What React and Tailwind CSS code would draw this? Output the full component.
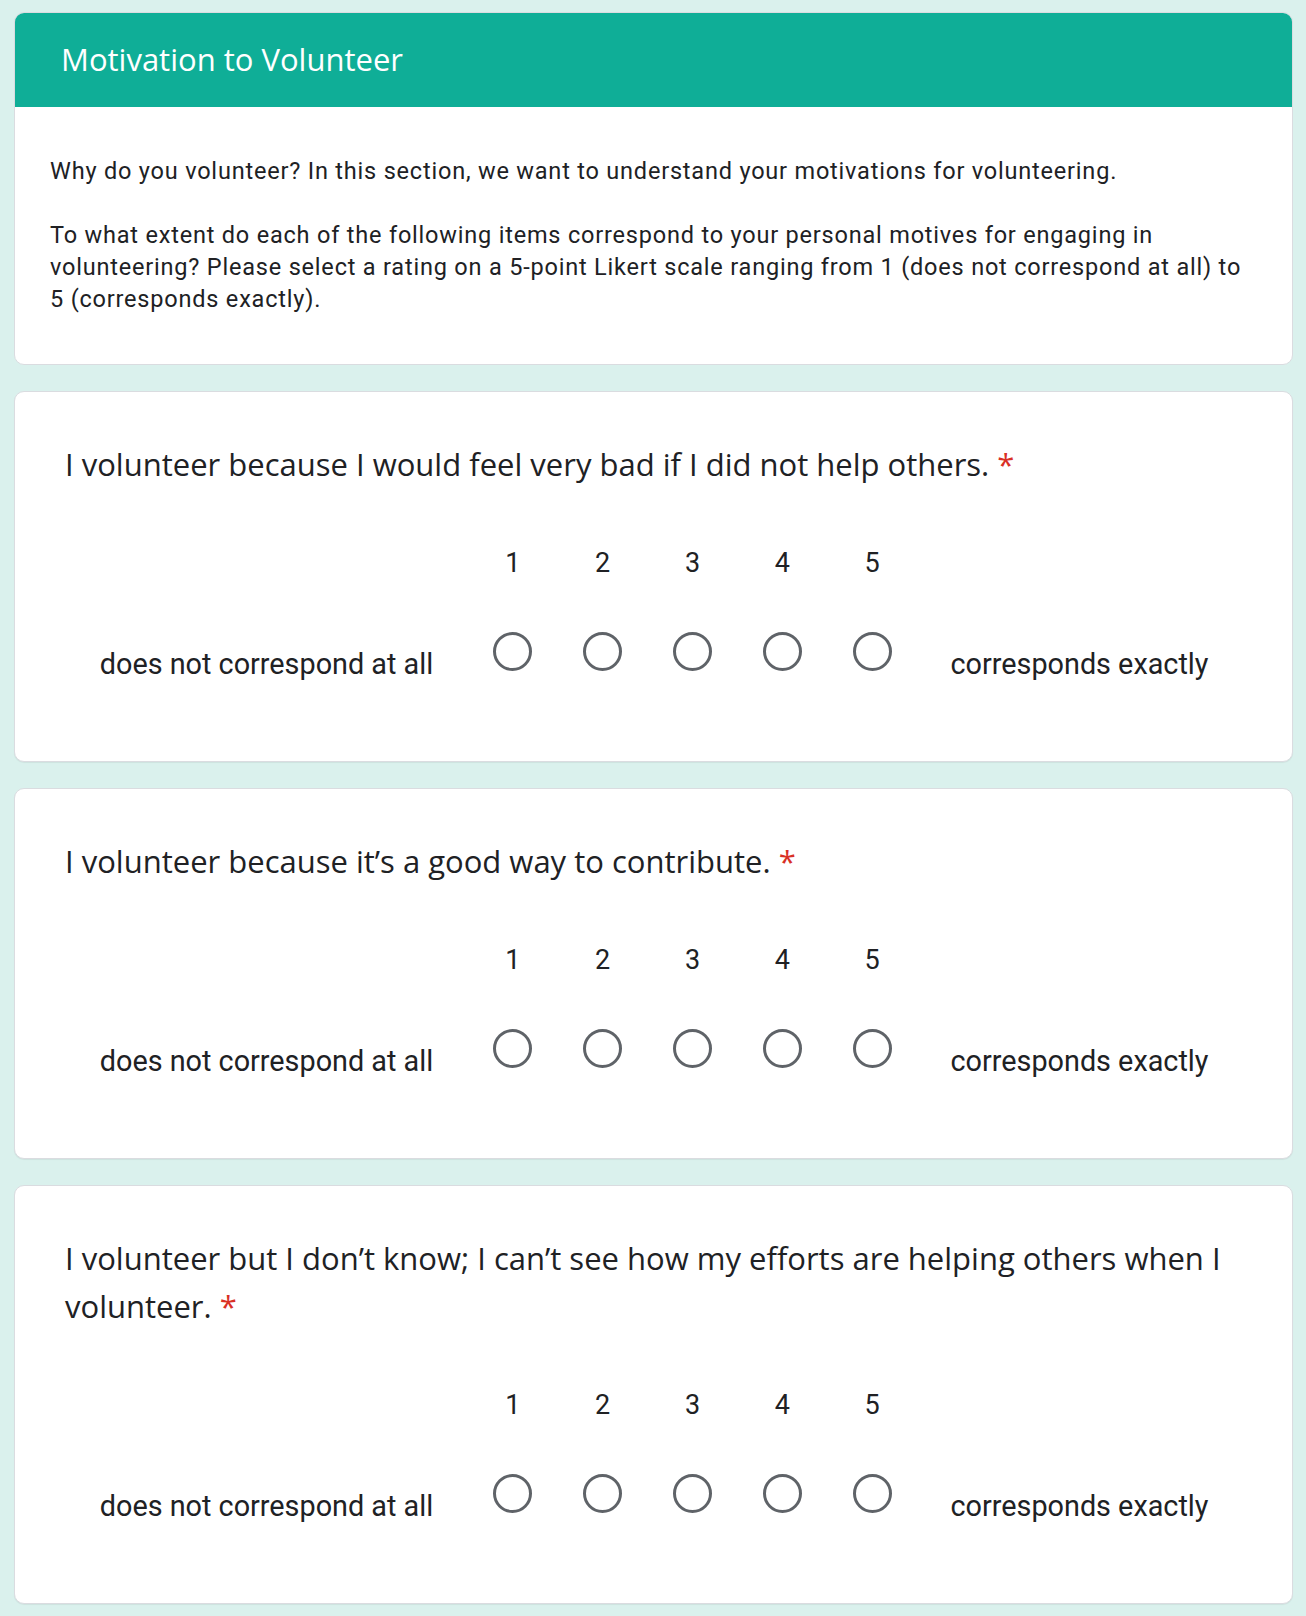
const questions = [
  "I volunteer because I would feel very bad if I did not help others.",
  "I volunteer because it’s a good way to contribute.",
  "I volunteer but I don’t know; I can’t see how my efforts are helping others when I volunteer.",
];

const heading = { fontFamily: '"Open Sans", Roboto, sans-serif' };

function Radio() {
  return <div className="w-[39px] h-[39px] rounded-full border-[3px] border-[#5f6368] bg-white" />;
}

function QuestionCard({ title }) {
  return (
    <div className="bg-white rounded-[10px] border border-[#dadce0] shadow-[0_1px_1px_rgba(0,0,0,0.06)] px-[50px] pt-[48px] pb-[80px]">
      <h2 className="text-[31px] leading-[48px] text-[#202124] pr-[20px]" style={heading}>
        {title} <span className="text-[#d93025]">*</span>
      </h2>

      <div className="mt-[58px] font-['Roboto',sans-serif] text-[#202124]">
        {/* numbers */}
        <div className="flex h-[34px] items-center">
          <div className="w-[403px]" />
          {[1, 2, 3, 4, 5].map((n) => (
            <div key={n} className="w-[89.8px] text-center text-[27px]">
              {n}
            </div>
          ))}
        </div>

        {/* radios + labels */}
        <div className="flex items-start mt-[52px]">
          <div className="w-[403px] text-center text-[28.8px] leading-[34px] mt-[15px]">
            does not correspond at all
          </div>
          {[1, 2, 3, 4, 5].map((n) => (
            <div key={n} className="w-[89.8px] flex justify-center">
              <Radio />
            </div>
          ))}
          <div className="flex-1 text-center text-[28.8px] leading-[34px] mt-[15px]">
            corresponds exactly
          </div>
        </div>
      </div>
    </div>
  );
}

export default function App() {
  return (
    <div className="min-h-screen bg-[#daf1ed] px-[14px] pt-[12px] pb-[15px]">
      <div className="w-[1279px] flex flex-col gap-[26px]">
        {/* Section header */}
        <div className="bg-white rounded-[10px] border border-[#dadce0] overflow-hidden">
          <div className="bg-[#0fae97] h-[95px] flex items-center px-[47px] -mx-px -mt-px">
            <h1 className="text-white text-[31px]" style={heading}>
              Motivation to Volunteer
            </h1>
          </div>
          <div className="px-[35px] pt-[48px] pb-[49px] font-['Roboto',sans-serif] text-[23.5px] tracking-[0.8px] leading-[32px] text-[#202124] whitespace-pre-line">
            {"Why do you volunteer? In this section, we want to understand your motivations for volunteering.\n\nTo what extent do each of the following items correspond to your personal motives for engaging in volunteering? Please select a rating on a 5-point Likert scale ranging from 1 (does not correspond at all) to 5 (corresponds exactly)."}
          </div>
        </div>

        {questions.map((q, i) => (
          <QuestionCard key={i} title={q} />
        ))}
      </div>
    </div>
  );
}
